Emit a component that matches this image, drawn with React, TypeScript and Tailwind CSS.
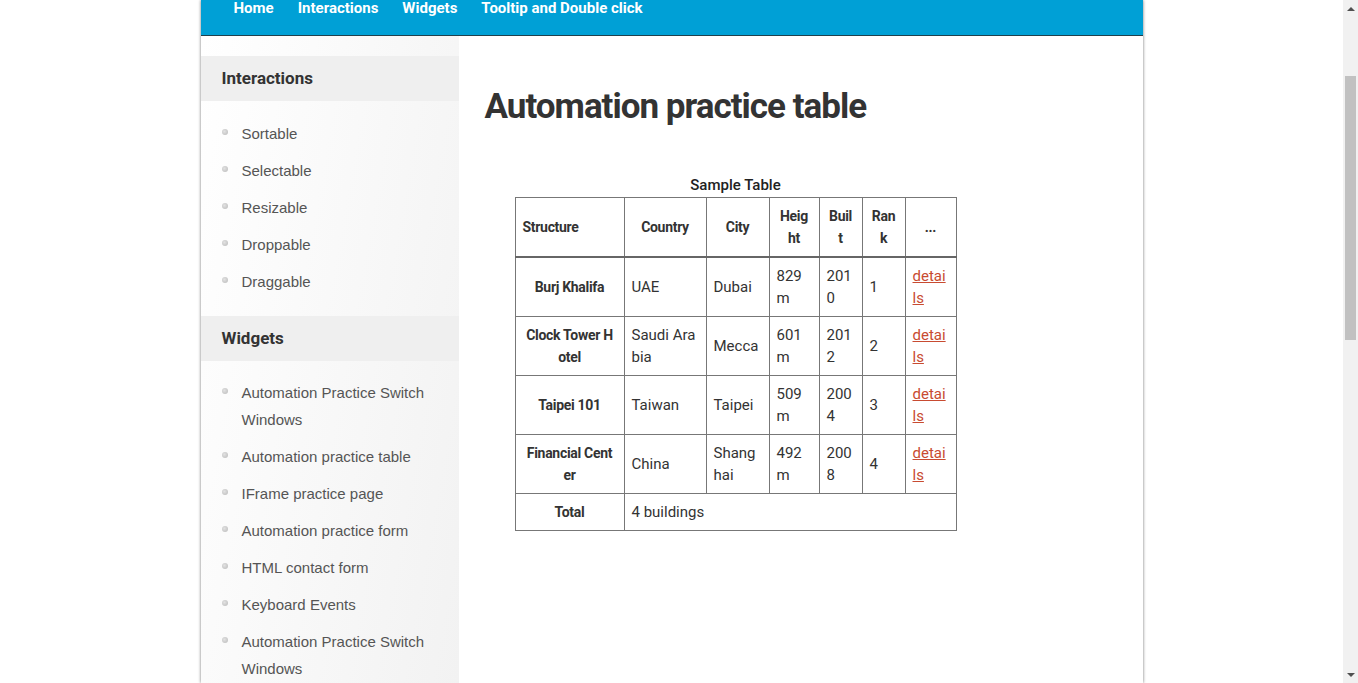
import React from "react";

const navItems = ["Home", "Interactions", "Widgets", "Tooltip and Double click"];
const interactions = ["Sortable", "Selectable", "Resizable", "Droppable", "Draggable"];
const widgets = [
  "Automation Practice Switch Windows",
  "Automation practice table",
  "IFrame practice page",
  "Automation practice form",
  "HTML contact form",
  "Keyboard Events",
  "Automation Practice Switch Windows",
];

function SideList({ items, first }: { items: string[]; first?: boolean }) {
  return (
    <ul className={(first ? "pt-[19px]" : "pt-[18px]") + " pb-[11px] pl-[21px] pr-[20px]"}>
      {items.map((t, i) => (
        <li key={i} className="flex items-start mb-[10px]">
          <span className="mt-[9px] w-[6px] h-[6px] rounded-full bg-[radial-gradient(circle_at_40%_40%,#e2e2e2,#b9b9b9)] shrink-0" />
          <span className="ml-[14px] text-[15px] leading-[27px] text-[#555] font-['Liberation_Sans',Arial,sans-serif]">
            {t}
          </span>
        </li>
      ))}
    </ul>
  );
}

function SideHeader({ children }: { children: React.ReactNode }) {
  return (
    <div className="h-[45px] bg-[#efefef] flex items-center pl-[21px] text-[17px] font-bold text-[#333]">
      {children}
    </div>
  );
}

type Row = {
  name: React.ReactNode;
  country: React.ReactNode;
  city: React.ReactNode;
  height: React.ReactNode;
  built: React.ReactNode;
  rank: string;
};

const rows: Row[] = [
  { name: "Burj Khalifa", country: "UAE", city: "Dubai", height: <>829<br />m</>, built: <>201<br />0</>, rank: "1" },
  { name: <>Clock Tower H<br />otel</>, country: <>Saudi Ara<br />bia</>, city: "Mecca", height: <>601<br />m</>, built: <>201<br />2</>, rank: "2" },
  { name: "Taipei 101", country: "Taiwan", city: "Taipei", height: <>509<br />m</>, built: <>200<br />4</>, rank: "3" },
  { name: <>Financial Cent<br />er</>, country: "China", city: <>Shang<br />hai</>, height: <>492<br />m</>, built: <>200<br />8</>, rank: "4" },
];

const cell = "border border-[#777] px-[7px] py-[7px] align-middle whitespace-nowrap";
const th = cell + " font-bold text-[14px] tracking-[-0.3px] text-center";
const td = cell + " text-left";
const thHead = th + " border-b-2 border-b-[#666]";

function Scrollbar() {
  return (
    <div className="w-[15px] h-full bg-[#f1f1f1] flex flex-col items-center shrink-0">
      <div className="h-[17px] w-full flex items-center justify-center">
        <div className="w-0 h-0 border-l-[4px] border-r-[4px] border-b-[4px] border-l-transparent border-r-transparent border-b-[#505050]" />
      </div>
      <div className="h-[59px]" />
      <div className="w-[11px] h-[264px] bg-[#c1c1c1]" />
      <div className="flex-1" />
      <div className="h-[17px] w-full flex items-center justify-center">
        <div className="w-0 h-0 border-l-[4px] border-r-[4px] border-t-[4px] border-l-transparent border-r-transparent border-t-[#505050]" />
      </div>
    </div>
  );
}

export default function App() {
  return (
    <div className="w-[1358px] h-[683px] flex bg-white overflow-hidden font-['Roboto',sans-serif] text-[#333]">
      <div className="flex-1 flex justify-center">
        <div className="w-[942px] h-full flex flex-col shadow-[0_0_3px_rgba(0,0,0,0.55)] bg-white">
          <nav className="h-[36px] bg-[#00a0d6] border-b border-[#20404c] flex items-start pl-[21px] shrink-0">
            {navItems.map((n) => (
              <span key={n} className="px-[12px] text-white font-bold text-[15px] leading-[16px]">
                {n}
              </span>
            ))}
          </nav>
          <div className="flex flex-1 min-h-0">
            <aside className="w-[258px] shrink-0 bg-[linear-gradient(100deg,#ffffff_0%,#f2f2f2_100%)] pt-[20px]">
              <SideHeader>Interactions</SideHeader>
              <SideList items={interactions} first />
              <SideHeader>Widgets</SideHeader>
              <SideList items={widgets} />
            </aside>
            <main className="flex-1 pl-[26px] pt-[50px]">
              <h1 className="text-[35px] leading-[42px] font-bold tracking-[-1px] text-[#333]">
                Automation practice table
              </h1>
              <div className="pl-[30px] pt-[46px]">
                <table className="border-collapse table-fixed w-[441px] text-[15px] leading-[22px] text-[#333]">
                  <caption className="font-medium text-[15px] leading-[23px] text-[#222]">Sample Table</caption>
                  <colgroup>
                    <col className="w-[109px]" />
                    <col className="w-[82px]" />
                    <col className="w-[63px]" />
                    <col className="w-[50px]" />
                    <col className="w-[43px]" />
                    <col className="w-[43px]" />
                    <col className="w-[51px]" />
                  </colgroup>
                  <thead>
                    <tr>
                      <th className={thHead + " !text-left"}>Structure</th>
                      <th className={thHead}>Country</th>
                      <th className={thHead}>City</th>
                      <th className={thHead}>Heig<br />ht</th>
                      <th className={thHead}>Buil<br />t</th>
                      <th className={thHead}>Ran<br />k</th>
                      <th className={thHead}>...</th>
                    </tr>
                  </thead>
                  <tbody>
                    {rows.map((r, i) => (
                      <tr key={i}>
                        <th className={th}>{r.name}</th>
                        <td className={td}>{r.country}</td>
                        <td className={td}>{r.city}</td>
                        <td className={td}>{r.height}</td>
                        <td className={td}>{r.built}</td>
                        <td className={td}>{r.rank}</td>
                        <td className={td}>
                          <a href="#" className="text-[#c84b31] underline">detai<br />ls</a>
                        </td>
                      </tr>
                    ))}
                  </tbody>
                  <tfoot>
                    <tr>
                      <th className={th}>Total</th>
                      <td className={td} colSpan={6}>4 buildings</td>
                    </tr>
                  </tfoot>
                </table>
              </div>
            </main>
          </div>
        </div>
      </div>
      <Scrollbar />
    </div>
  );
}
